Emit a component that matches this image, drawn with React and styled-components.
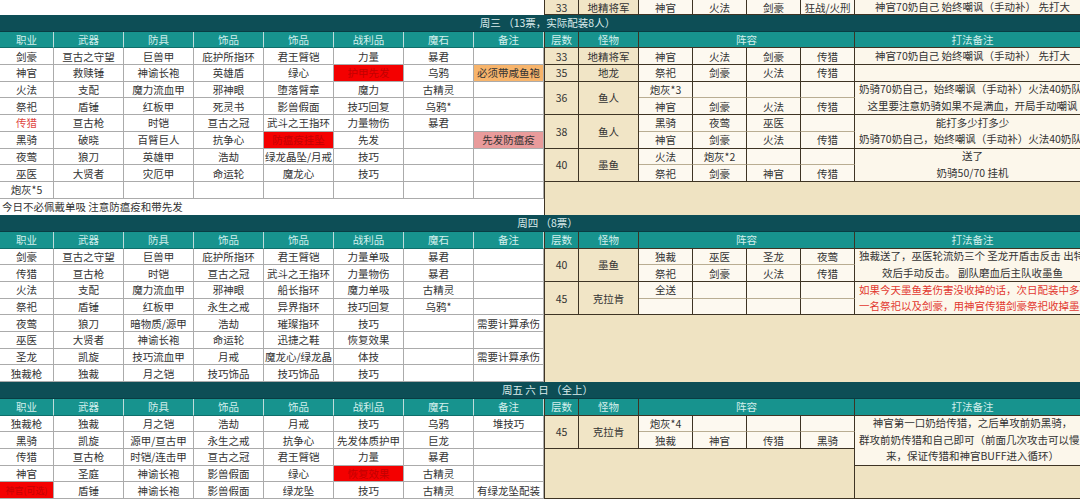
import React from 'react';
import styled, { createGlobalStyle } from 'styled-components';

const R = '16.7px';

const GlobalStyle = createGlobalStyle`
  html, body {
    margin: 0;
    padding: 0;
    background: #fff;
    overflow: hidden;
  }
  body {
    font-family: "Noto Sans CJK SC", "Microsoft YaHei", sans-serif;
    font-size: 10.5px;
    color: #333;
  }
`;

const Sheet = styled.div`
  width: 1095px;
  display: flex;
  flex-direction: column;
`;

const Band = styled.div`
  display: flex;
  align-items: stretch;
`;

const LeftBlank = styled.div`
  width: 544px;
  flex: none;
  background: #fff;
`;

const TitleBar = styled.div`
  height: ${R};
  line-height: ${R};
  box-sizing: border-box;
  background: #0d4e56;
  border-bottom: 1px solid #093d43;
  color: #dcecec;
  text-align: center;
  white-space: pre;
`;

/* ---------- left: equipment table ---------- */

const LeftGrid = styled.div`
  flex: none;
  display: grid;
  grid-template-columns: 54px repeat(7, 70px);
  grid-auto-rows: ${R};
  align-content: start;
  background: #fff;
`;

const fills = {
  red: '#f40000',
  orange: '#f7b46b',
  pink: '#e99b9b',
};

const Head = styled.div`
  box-sizing: border-box;
  display: flex;
  align-items: center;
  justify-content: center;
  background: #17938e;
  color: #d3efec;
  border-right: 1px solid #bfdcda;
  border-bottom: 1px solid #0f6f6b;
  grid-column: ${p => (p.$span ? `span ${p.$span}` : 'auto')};
`;

const Cell = styled.div`
  box-sizing: border-box;
  display: flex;
  align-items: center;
  justify-content: center;
  white-space: nowrap;
  overflow: hidden;
  font-size: ${p => (p.$small ? '9px' : 'inherit')};
  border-right: 1px solid #ababab;
  border-bottom: 1px solid #ababab;
  background: ${p => fills[p.$fill] || '#fff'};
  color: ${p => (p.$fill === 'red' ? '#c20000' : p.$red ? '#e0463e' : '#333')};
`;

const DayNote = styled.div`
  grid-column: 1 / -1;
  display: flex;
  align-items: center;
  padding-left: 2px;
  background: #fff;
  color: #333;
`;

const leftHeads = ['职业', '武器', '防具', '饰品', '饰品', '战利品', '魔石', '备注'];

const LeftTable = ({ rows, note }) => (
  <LeftGrid>
    {leftHeads.map((h, i) => (
      <Head key={i}>{h}</Head>
    ))}
    {rows.map((row, r) =>
      row.map((c, i) => {
        const v = typeof c === 'string' ? { t: c } : c;
        return (
          <Cell key={`${r}-${i}`} $fill={v.fill} $red={v.red} $small={v.small}>
            {v.t}
          </Cell>
        );
      })
    )}
    {note && <DayNote>{note}</DayNote>}
  </LeftGrid>
);

/* ---------- right: floor / lineup table ---------- */

const RightGrid = styled.div`
  flex: none;
  display: grid;
  grid-template-columns: 34px 60px repeat(4, 54px) 236px;
  grid-auto-rows: ${p => p.$row || R};
  align-content: start;
  border-left: 1px solid #3e3424;
  background: #efe3c2;
`;

const RHead = styled(Head)`
  border-right-color: #3e3424;
  border-bottom-color: #3e3424;
`;

const Floor = styled.div`
  box-sizing: border-box;
  grid-row: span ${p => p.$rows};
  display: flex;
  align-items: center;
  justify-content: center;
  white-space: nowrap;
  background: #f1e5c6;
  border-right: 1px solid #3e3424;
  border-bottom: 1px solid #3e3424;
`;

const Member = styled.div`
  box-sizing: border-box;
  display: flex;
  align-items: center;
  justify-content: center;
  white-space: nowrap;
  background: #fdf9f0;
  border-right: 1px solid #3e3424;
  border-bottom: 1px solid ${p => (p.$soft ? '#b9ad92' : '#3e3424')};
`;

const Notes = styled.div`
  box-sizing: border-box;
  grid-row: span ${p => p.$rows};
  display: flex;
  flex-direction: column;
  justify-content: center;
  background: #fcf7eb;
  border-right: 1px solid #3e3424;
  border-bottom: 1px solid #3e3424;
  overflow: visible;
`;

const NoteLine = styled.div`
  height: ${R};
  line-height: ${R};
  flex: none;
  white-space: nowrap;
  text-align: ${p => (p.$left ? 'left' : 'center')};
  padding-left: ${p => (p.$left ? '4px' : '0')};
  color: ${p => (p.$red ? '#e2372f' : '#333')};
`;

const Filler = styled.div`
  box-sizing: border-box;
  grid-column: ${p => p.$col};
  grid-row: span ${p => p.$rows};
  background: #efe3c2;
  border-right: ${p => (p.$right ? '1px solid #3e3424' : 'none')};
  border-bottom: ${p => (p.$bottom ? '1px solid #3e3424' : 'none')};
`;

/* grid auto-placement needs the notes cell right after the first lineup row,
   so each floor group is emitted in that order */
const FloorRows = ({ floors, fillers = [], header = true, row }) => (
  <RightGrid $row={row}>
    {header && (
      <>
        <RHead>层数</RHead>
        <RHead>怪物</RHead>
        <RHead $span={4}>阵容</RHead>
        <RHead>打法备注</RHead>
      </>
    )}
    {floors.map((f, gi) => {
      const n = f.team.length;
      const noteRows = f.noteRows || n;
      return (
        <React.Fragment key={gi}>
          <Floor $rows={n}>{f.floor}</Floor>
          <Floor $rows={n}>{f.mob}</Floor>
          {f.team[0].map((m, mi) => (
            <Member key={`a${mi}`} $soft={n > 1}>
              {m}
            </Member>
          ))}
          <Notes $rows={noteRows}>
            {f.notes.map((l, li) => (
              <NoteLine key={li} $left={l.left} $red={l.red}>
                {l.t}
              </NoteLine>
            ))}
          </Notes>
          {f.team.slice(1).map((line, li) =>
            line.map((m, mi) => (
              <Member key={`b${li}-${mi}`} $soft={li + 1 < n - 1}>
                {m}
              </Member>
            ))
          )}
        </React.Fragment>
      );
    })}
    {fillers.map((fl, i) => (
      <Filler key={i} $col={fl.col} $rows={fl.rows} $right={fl.right} $bottom={fl.bottom} />
    ))}
  </RightGrid>
);

/* ---------- data ---------- */

const prevFloor = [
  {
    floor: '33',
    mob: '地精将军',
    team: [['神官', '火法', '剑豪', '狂战/火刑']],
    notes: [{ t: '神官70奶自己 始终嘲讽（手动补） 先打大' }],
  },
];

const wedRows = [
  ['剑豪', '亘古之守望', '巨兽甲', '庇护所指环', '君王臂铠', '力量', '暴君', ''],
  ['神官', '救赎锤', '神谕长袍', '英雄盾', '绿心', { t: '护甲先发', fill: 'red' }, '乌鸦', { t: '必须带咸鱼袍', fill: 'orange' }],
  ['火法', '支配', '魔力流血甲', '邪神眼', '堕落臂章', '魔力', '古精灵', ''],
  ['祭祀', '盾锤', '红板甲', '死灵书', '影兽假面', '技巧回复', '乌鸦*', ''],
  [{ t: '传猎', red: true }, '亘古枪', '时铠', '亘古之冠', '武斗之王指环', '力量物伤', '暴君', ''],
  ['黑骑', '破晓', '百臂巨人', '抗争心', { t: '防瘟疫挂坠', fill: 'red' }, '先发', '', { t: '先发防瘟疫', fill: 'pink' }],
  ['夜莺', '狼刀', '英雄甲', '浩劫', '绿龙晶坠/月戒', '技巧', '', ''],
  ['巫医', '大贤者', '灾厄甲', '命运轮', '魔龙心', '技巧', '', ''],
  ['炮灰*5', '', '', '', '', '', '', ''],
];

const wedFloors = [
  {
    floor: '33',
    mob: '地精将军',
    team: [['神官', '火法', '剑豪', '传猎']],
    notes: [{ t: '神官70奶自己 始终嘲讽（手动补） 先打大' }],
  },
  { floor: '35', mob: '地龙', team: [['祭祀', '剑豪', '火法', '传猎']], notes: [{ t: '' }] },
  {
    floor: '36',
    mob: '鱼人',
    team: [['炮灰*3', '', '', ''], ['神官', '剑豪', '火法', '传猎']],
    notes: [
      { t: '奶骑70奶自己，始终嘲讽（手动补）火法40奶队友', left: true },
      { t: '这里要注意奶骑如果不是满血，开局手动嘲讽' },
    ],
  },
  {
    floor: '38',
    mob: '鱼人',
    team: [['黑骑', '夜莺', '巫医', ''], ['神官', '剑豪', '火法', '传猎']],
    notes: [{ t: '能打多少打多少' }, { t: '奶骑70奶自己，始终嘲讽（手动补）火法40奶队友', left: true }],
  },
  {
    floor: '40',
    mob: '墨鱼',
    team: [['火法', '炮灰*2', '', ''], ['祭祀', '剑豪', '神官', '传猎']],
    notes: [{ t: '送了' }, { t: '奶骑50/70 挂机' }],
  },
];

const thuRows = [
  ['剑豪', '亘古之守望', '巨兽甲', '庇护所指环', '君王臂铠', '力量单吸', '暴君', ''],
  ['传猎', '亘古枪', '时铠', '亘古之冠', '武斗之王指环', '力量物伤', '暴君', ''],
  ['火法', '支配', '魔力流血甲', '邪神眼', '船长指环', '魔力单吸', '古精灵', ''],
  ['祭祀', '盾锤', '红板甲', '永生之戒', '异界指环', '技巧回复', '乌鸦*', ''],
  ['夜莺', '狼刀', '暗物质/源甲', '浩劫', '璀璨指环', '技巧', '', '需要计算承伤'],
  ['巫医', '大贤者', '神谕长袍', '命运轮', '迅捷之鞋', '恢复效果', '', ''],
  ['圣龙', '凯旋', '技巧流血甲', '月戒', '魔龙心/绿龙晶', '体技', '', '需要计算承伤'],
  ['独裁枪', '独裁', '月之铠', '技巧饰品', '技巧饰品', '技巧', '', ''],
];

const thuFloors = [
  {
    floor: '40',
    mob: '墨鱼',
    team: [['独裁', '巫医', '圣龙', '夜莺'], ['祭祀', '剑豪', '火法', '传猎']],
    notes: [
      { t: '独裁送了，巫医轮流奶三个 圣龙开盾击反击 出特', left: true },
      { t: '效后手动反击。 副队磨血后主队收墨鱼' },
    ],
  },
  {
    floor: '45',
    mob: '克拉肯',
    team: [['全送', '', '', ''], ['', '', '', '']],
    notes: [
      { t: '如果今天墨鱼差伤害没收掉的话，次日配装中多带', left: true, red: true },
      { t: '一名祭祀以及剑豪，用神官传猎剑豪祭祀收掉墨鱼', left: true, red: true },
    ],
  },
];

const friRows = [
  ['独裁枪', '独裁', '月之铠', '浩劫', '月戒', '技巧', '乌鸦', '堆技巧'],
  ['黑骑', '凯旋', '源甲/亘古甲', '永生之戒', '抗争心', '先发体质护甲', '巨龙', ''],
  ['传猎', '亘古枪', '时铠/连击甲', '亘古之冠', '君王臂铠', '力量', '暴君', ''],
  ['神官', '圣庭', '神谕长袍', '影兽假面', '绿心', { t: '恢复效果', fill: 'red' }, '古精灵', ''],
  [{ t: '神官(可选)', fill: 'red', small: true }, '盾锤', '神谕长袍', '影兽假面', '绿龙坠', '技巧', '古精灵', '有绿龙坠配装'],
];

const friFloors = [
  {
    floor: '45',
    mob: '克拉肯',
    team: [['炮灰*4', '', '', ''], ['独裁', '神官', '传猎', '黑骑']],
    noteRows: 3,
    notes: [
      { t: '神官第一口奶给传猎，之后单攻前奶黑骑，' },
      { t: '群攻前奶传猎和自己即可（前面几次攻击可以慢点', left: true },
      { t: '来，保证传猎和神官BUFF进入循环）' },
    ],
  },
];

const App = () => (
  <>
    <GlobalStyle />
    <Sheet>
      <Band>
        <LeftBlank />
        <FloorRows floors={prevFloor} header={false} row="15px" />
      </Band>

      <TitleBar>周三 （13票，实际配装8人）</TitleBar>
      <Band>
        <LeftTable rows={wedRows} note="今日不必佩戴单吸 注意防瘟疫和带先发" />
        <FloorRows floors={wedFloors} fillers={[{ col: '1 / -1', rows: 2 }]} />
      </Band>

      <TitleBar>周四 （8票）</TitleBar>
      <Band>
        <LeftTable rows={thuRows} />
        <FloorRows floors={thuFloors} fillers={[{ col: '1 / -1', rows: 4 }]} />
      </Band>

      <TitleBar>周五 六 日 （全上）</TitleBar>
      <Band>
        <LeftTable rows={friRows} />
        <FloorRows
          floors={friFloors}
          fillers={[
            { col: '1 / span 6', rows: 3, right: true, bottom: true },
            { col: '7', rows: 2, bottom: true },
          ]}
        />
      </Band>
    </Sheet>
  </>
);

export default App;
